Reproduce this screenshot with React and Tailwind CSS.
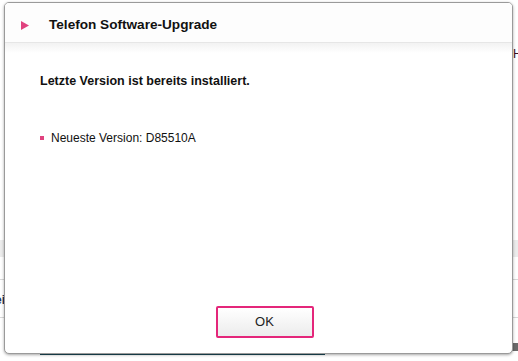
import React from "react";

function Remnants() {
  return (
    <div className="absolute inset-0 pointer-events-none">
      <div className="absolute left-0 top-[240px] w-[6px] h-[17px] bg-[#ececec]" />
      <div className="absolute left-0 top-[279px] w-[6px] h-px bg-[#d8d8d8]" />
      <div className="absolute left-0 top-[317px] w-[6px] h-px bg-[#d8d8d8]" />
      <div className="absolute left-[-5px] top-[291px] text-[12px] font-bold text-[#1c3154]">ei</div>
      <div className="absolute right-0 top-[240px] w-[8px] h-[17px] bg-[#ececec]" />
      <div className="absolute right-0 top-[279px] w-[8px] h-px bg-[#d8d8d8]" />
      <div className="absolute right-0 top-[317px] w-[8px] h-px bg-[#d8d8d8]" />
      <div className="absolute left-[513px] top-[45px] text-[12px] text-[#3a1020]">H</div>
      <div className="absolute left-[40px] top-[352px] w-[285px] h-[3px] bg-[#1c4a5a]" />
      <div className="absolute left-[510px] top-[343px] w-[8px] h-[8px] bg-[#6a6a6a]" />
    </div>
  );
}

export default function App() {
  return (
    <div
      className="relative w-[518px] h-[361px] bg-white overflow-hidden pl-[4px] pt-[2px]"
      style={{ fontFamily: '"Liberation Sans", Arial, sans-serif' }}
    >
      <Remnants />
      <div className="relative w-[509px] h-[352px] bg-white border border-[#9a9a9a] rounded-[5px] shadow-[0_1px_3px_rgba(0,0,0,0.35)] flex flex-col overflow-hidden">
        <div className="h-[40px] shrink-0 flex items-center pl-[16px] pt-[6px] bg-[#fdfdfd] border-b border-[#e6e6e6]">
          <svg width="8" height="9" viewBox="0 0 8 9" className="mr-[20px]">
            <polygon points="0,0 8,4.5 0,9" fill="#e0427f" />
          </svg>
          <span className="text-[13.6px] font-bold text-[#111]">Telefon Software-Upgrade</span>
        </div>
        <div className="h-[10px] bg-gradient-to-b from-[#f2f2f2] to-white shrink-0" />
        <div className="flex-1 flex flex-col pl-[35px]">
          <div className="mt-[19px] text-[12.5px] font-bold text-[#111]">Letzte Version ist bereits installiert.</div>
          <div className="mt-[38px] flex items-center text-[12px] text-[#111]">
            <span className="w-[4px] h-[4px] bg-[#e0427f] mr-[7px]" />
            Neueste Version: D85510A
          </div>
        </div>
        <div className="flex justify-center pb-[15px] pl-[12px]">
          <button className="w-[98px] h-[32px] border-2 border-[#e4267a] rounded-[2px] bg-gradient-to-b from-white to-[#ececec] text-[13px] text-[#222]">
            OK
          </button>
        </div>
      </div>
    </div>
  );
}
